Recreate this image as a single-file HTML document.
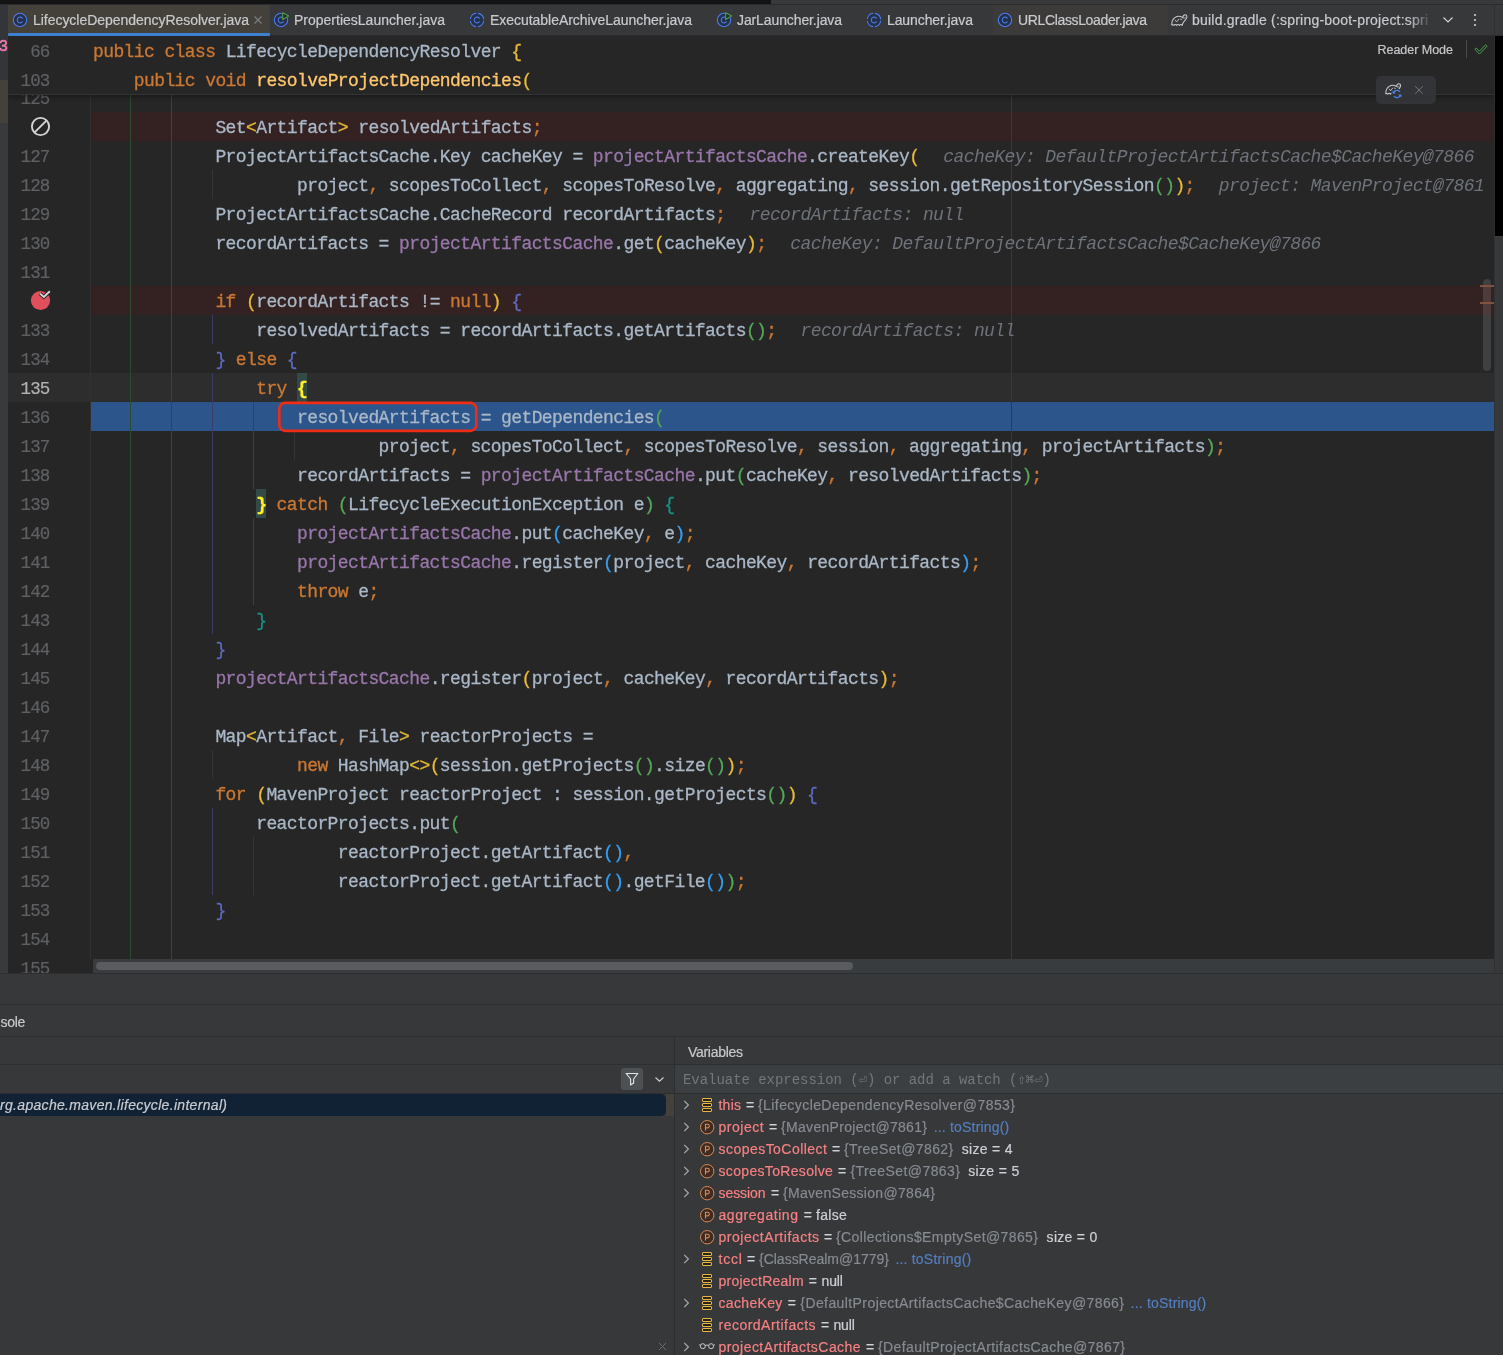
<!DOCTYPE html>
<html><head><meta charset="utf-8"><title>IDE</title>
<style>
*{box-sizing:border-box}
html,body{margin:0;padding:0}
body{will-change:transform;width:1503px;height:1355px;position:relative;overflow:hidden;background:#37383a;font-family:"Liberation Sans",sans-serif;font-size:14px;color:#ced0d6}
div,span,svg{position:absolute}
span{position:static}
.abs{position:absolute}
#editor{left:8px;top:36px;width:1486px;height:937px;background:#262626;overflow:hidden}
.ln{left:0;width:1486px;height:29px}
.code{position:absolute;top:0;height:29px;line-height:32px;white-space:pre;font-family:"Liberation Mono",monospace;font-size:18px;letter-spacing:-0.6px;color:#a9b7c6;-webkit-text-stroke:0.3px}
.num{position:absolute;left:0;width:41.4px;text-align:right;top:0;height:29px;line-height:32px;font-family:"Liberation Mono",monospace;font-size:17.5px;letter-spacing:-0.9px;-webkit-text-stroke:0.2px;color:#5e6063;white-space:pre}
.k{color:#cc7832}.f{color:#9876aa}.m{color:#ffc66d}.p{color:#cc7832}
.b0{color:#e8ba36}.b1{color:#54a857}.b2{color:#359ff4}.c2{color:#5c6bc0}.c3{color:#179387}
.bm{color:#ffef28;font-weight:bold;background:#344a47;display:inline-block;height:29px;vertical-align:top}
.h{color:#6e727a;font-style:italic;margin-left:24px;-webkit-text-stroke:0}
.g{width:1px}
.tab{top:4px;height:32px;line-height:32px;font-size:14px;color:#c9cace;white-space:pre;-webkit-text-stroke:0.2px}
.hs{left:0;width:1503px;height:1px;background:#2d2e30}
.row{height:22px;line-height:23px;white-space:pre;font-size:14px;-webkit-text-stroke:0.2px}
.vn{color:#f68183}.vg{color:#868a91}.vl{color:#547fbf}.vw{color:#ced0d6}
</style></head><body>

<div style="left:0;top:0;width:771px;height:4px;background:#131313"></div>
<div style="left:771px;top:0;width:732px;height:4px;background:#38393b"></div>
<div style="left:0;top:4px;width:1503px;height:1px;background:#2b2c2e;z-index:3"></div>
<div style="left:0;top:4px;width:1503px;height:32px;background:#37383a"></div>
<div style="left:0;top:35px;width:1503px;height:1px;background:#2b2b2d"></div>
<div style="left:0;top:4px;width:8px;height:76px;background:#333538"></div>
<div style="left:0;top:80px;width:8px;height:43px;background:#44413a"></div>
<div style="left:0;top:123px;width:8px;height:850px;background:#393a3c"></div>
<div style="left:-1.5px;top:36px;width:9.5px;height:22px;line-height:22px;-webkit-text-stroke:0.4px;font:16px/22px 'Liberation Mono',monospace;color:#f47cb4;overflow:hidden;white-space:pre">3</div>
<div style="left:8px;top:4px;width:262px;height:32px;background:#44413a"></div>
<div style="left:8px;top:33px;width:262px;height:3px;background:#3e80d0;border-radius:1px"></div>
<div style="left:993px;top:5px;width:175px;height:30px;background:#3c3b3a"></div>
<svg style="left:12px;top:12px" width="18" height="16" viewBox="0 0 18 16"><circle cx="8" cy="8" r="6.7" fill="#25304a" stroke="#4a7df0" stroke-width="1.05"/><path d="M10.3 6.1 A2.9 2.9 0 1 0 10.3 9.9" fill="none" stroke="#4a7de8" stroke-width="1.05" stroke-linecap="round"/></svg>
<div id="tab33" class="tab" style="left:33px;top:4px;white-space:pre;letter-spacing:-0.036px;">LifecycleDependencyResolver.java</div>
<svg style="left:273px;top:12px" width="18" height="16" viewBox="0 0 18 16"><circle cx="8" cy="8" r="6.7" fill="#25304a" stroke="#4a7df0" stroke-width="1.05"/><path d="M10.3 6.1 A2.9 2.9 0 1 0 10.3 9.9" fill="none" stroke="#4a7de8" stroke-width="1.05" stroke-linecap="round"/><path d="M9.7 0.7 L15.7 4 L9.7 7.4 Z" fill="#1f2e20" stroke="#4f9c4f" stroke-width="1.1" stroke-linejoin="round"/></svg>
<div id="tab294" class="tab" style="left:294px;top:4px;white-space:pre;letter-spacing:0.000px;">PropertiesLauncher.java</div>
<svg style="left:469px;top:12px" width="18" height="16" viewBox="0 0 18 16"><circle cx="8" cy="8" r="6.7" fill="#25304a" stroke="#4a7df0" stroke-width="1.05" stroke-dasharray="8.7 1.82" stroke-dashoffset="-0.91"/><path d="M10.3 6.1 A2.9 2.9 0 1 0 10.3 9.9" fill="none" stroke="#4a7de8" stroke-width="1.05" stroke-linecap="round"/></svg>
<div id="tab490" class="tab" style="left:490px;top:4px;white-space:pre;letter-spacing:-0.039px;">ExecutableArchiveLauncher.java</div>
<svg style="left:716px;top:12px" width="18" height="16" viewBox="0 0 18 16"><circle cx="8" cy="8" r="6.7" fill="#25304a" stroke="#4a7df0" stroke-width="1.05"/><path d="M10.3 6.1 A2.9 2.9 0 1 0 10.3 9.9" fill="none" stroke="#4a7de8" stroke-width="1.05" stroke-linecap="round"/><path d="M9.7 0.7 L15.7 4 L9.7 7.4 Z" fill="#1f2e20" stroke="#4f9c4f" stroke-width="1.1" stroke-linejoin="round"/></svg>
<div id="tab737" class="tab" style="left:737px;top:4px;white-space:pre;letter-spacing:-0.109px;">JarLauncher.java</div>
<svg style="left:866px;top:12px" width="18" height="16" viewBox="0 0 18 16"><circle cx="8" cy="8" r="6.7" fill="#25304a" stroke="#4a7df0" stroke-width="1.05" stroke-dasharray="8.7 1.82" stroke-dashoffset="-0.91"/><path d="M10.3 6.1 A2.9 2.9 0 1 0 10.3 9.9" fill="none" stroke="#4a7de8" stroke-width="1.05" stroke-linecap="round"/></svg>
<div id="tab887" class="tab" style="left:887px;top:4px;white-space:pre;letter-spacing:-0.099px;">Launcher.java</div>
<svg style="left:997px;top:12px" width="18" height="16" viewBox="0 0 18 16"><circle cx="8" cy="8" r="6.7" fill="#25304a" stroke="#4a7df0" stroke-width="1.05"/><path d="M10.3 6.1 A2.9 2.9 0 1 0 10.3 9.9" fill="none" stroke="#4a7de8" stroke-width="1.05" stroke-linecap="round"/></svg>
<div id="tab1018" class="tab" style="left:1018px;top:4px;white-space:pre;letter-spacing:-0.356px;">URLClassLoader.java</div>
<svg style="left:253px;top:15px" width="10" height="10" viewBox="0 0 10 10"><path d="M1.5 1.5 L8.5 8.5 M8.5 1.5 L1.5 8.5" stroke="#7d7f84" stroke-width="1.1" fill="none"/></svg>
<svg style="left:1170.5px;top:13.8px" width="17.0" height="12.5" viewBox="0 0 17 12.5"><path d="M0.8 11 C0.6 8 1.8 5 4.2 3.4 C6.6 1.9 9.6 2.2 11.6 3.6 C12 2 12.8 0.7 14.2 0.7 C15.6 0.7 16.1 2.2 15.7 3.6 C15.2 5.4 13.8 6.6 12.6 8 C11.8 9 11.4 10.2 11.2 11.4 C10.4 10.2 9.2 10.2 8.4 11.4 C7.6 10.2 6.4 10.2 5.6 11.4 C4.8 10.2 3.6 10.2 2.8 11.4 C2.2 10.8 1.4 10.6 0.8 11 Z" fill="none" stroke="#c8cacf" stroke-width="1.05" stroke-linejoin="round"/><path d="M4.2 6.4 L5.8 7.8 L7.8 5.2 M9.6 5.2 L10.6 5.6 M11.6 3.6 C12.6 4.4 13.6 4.4 14.3 3.6" fill="none" stroke="#c8cacf" stroke-width="0.9450000000000001" stroke-linecap="round"/></svg>
<div id="tab1192" class="tab" style="left:1192px;top:4px;white-space:pre;letter-spacing:0.211px;">build.gradle (:spring-boot-project:spri</div>
<div style="left:1408px;top:5px;width:24px;height:29px;background:linear-gradient(90deg,rgba(55,56,58,0),rgba(55,56,58,0.95))"></div>
<svg style="left:1442px;top:15px" width="12" height="10" viewBox="0 0 12 10"><path d="M1.5 2.5 L6 7 L10.5 2.5" fill="none" stroke="#ced0d6" stroke-width="1.2"/></svg>
<svg style="left:1472px;top:12px" width="6" height="16" viewBox="0 0 6 16"><circle cx="3" cy="3" r="1.1" fill="#ced0d6"/><circle cx="3" cy="8" r="1.1" fill="#ced0d6"/><circle cx="3" cy="13" r="1.1" fill="#ced0d6"/></svg>
<div style="left:1494px;top:36px;width:1px;height:200px;background:#2e2e2e"></div>
<div style="left:1495px;top:36px;width:8px;height:200px;background:#000"></div>
<div style="left:1494px;top:236px;width:9px;height:737px;background:#37383a"></div>
<div style="left:1494px;top:4px;width:1px;height:32px;background:#2f3032"></div>
<div style="left:1494px;top:236px;width:1px;height:737px;background:#303133"></div>
<div style="left:1495px;top:236px;width:8px;height:1px;background:#3c3d3f"></div>
<div id="editor">
<div style="left:0;top:337px;width:1486px;height:29px;background:#2d2d2d"></div>
<div style="left:83px;top:76px;width:1403px;height:29px;background:#342121"></div>
<div style="left:83px;top:250px;width:1403px;height:29px;background:#342121"></div>
<div style="left:83px;top:366px;width:1403px;height:29px;background:#2c558c"></div>
<div class="g" style="left:82px;top:0;height:923px;background:#313131"></div>
<div class="g" style="left:1003px;top:58px;height:865px;background:#393939"></div>
<div class="g" style="left:122px;top:58px;height:865px;background:#2c4a2e"></div>
<div class="g" style="left:163px;top:58px;height:865px;background:#2a4463"></div>
<div class="g" style="left:204px;top:279px;height:29px;background:#3b3d66"></div>
<div class="g" style="left:204px;top:337px;height:261px;background:#3b3d66"></div>
<div class="g" style="left:204px;top:772px;height:87px;background:#3b3d66"></div>
<div class="g" style="left:204px;top:134px;height:29px;background:#343434"></div>
<div class="g" style="left:204px;top:714px;height:29px;background:#343434"></div>
<div class="g" style="left:245px;top:366px;height:87px;background:#1f4e49"></div>
<div class="g" style="left:245px;top:482px;height:87px;background:#1f4e49"></div>
<div class="g" style="left:245px;top:801px;height:58px;background:#353535"></div>
<div class="g" style="left:286px;top:395px;height:29px;background:#353535"></div>
<div class="ln" style="top:47px">
<div class="num">125</div>
</div>
<div class="ln" style="top:76px">
<div class="code" style="left:207.4px">Set<span class="b0">&lt;</span>Artifact<span class="b0">&gt;</span> resolvedArtifacts<span class="p">;</span></div>
</div>
<div class="ln" style="top:105px">
<div class="num">127</div>
<div class="code" style="left:207.4px">ProjectArtifactsCache.Key cacheKey = <span class="f">projectArtifactsCache</span>.createKey<span class="b0">(</span><span class="h">cacheKey: DefaultProjectArtifactsCache$CacheKey@7866</span></div>
</div>
<div class="ln" style="top:134px">
<div class="num">128</div>
<div class="code" style="left:289.0px">project<span class="p">,</span> scopesToCollect<span class="p">,</span> scopesToResolve<span class="p">,</span> aggregating<span class="p">,</span> session.getRepositorySession<span class="b1">()</span><span class="b0">)</span><span class="p">;</span><span class="h">project: MavenProject@7861</span></div>
</div>
<div class="ln" style="top:163px">
<div class="num">129</div>
<div class="code" style="left:207.4px">ProjectArtifactsCache.CacheRecord recordArtifacts<span class="p">;</span><span class="h">recordArtifacts: null</span></div>
</div>
<div class="ln" style="top:192px">
<div class="num">130</div>
<div class="code" style="left:207.4px">recordArtifacts = <span class="f">projectArtifactsCache</span>.get<span class="b0">(</span>cacheKey<span class="b0">)</span><span class="p">;</span><span class="h">cacheKey: DefaultProjectArtifactsCache$CacheKey@7866</span></div>
</div>
<div class="ln" style="top:221px">
<div class="num">131</div>
</div>
<div class="ln" style="top:250px">
<div class="code" style="left:207.4px"><span class="k">if </span><span class="b0">(</span>recordArtifacts != <span class="k">null</span><span class="b0">)</span> <span class="c2">{</span></div>
</div>
<div class="ln" style="top:279px">
<div class="num">133</div>
<div class="code" style="left:248.2px">resolvedArtifacts = recordArtifacts.getArtifacts<span class="b1">()</span><span class="p">;</span><span class="h">recordArtifacts: null</span></div>
</div>
<div class="ln" style="top:308px">
<div class="num">134</div>
<div class="code" style="left:207.4px"><span class="c2">}</span><span class="k"> else </span><span class="c2">{</span></div>
</div>
<div class="ln" style="top:337px">
<div class="num" style="color:#b2b2b2">135</div>
<div class="code" style="left:248.2px"><span class="k">try </span><span class="bm">{</span></div>
</div>
<div class="ln" style="top:366px">
<div class="num">136</div>
<div class="code" style="left:289.0px">resolvedArtifacts = getDependencies<span class="b1">(</span></div>
</div>
<div class="ln" style="top:395px">
<div class="num">137</div>
<div class="code" style="left:370.6px">project<span class="p">,</span> scopesToCollect<span class="p">,</span> scopesToResolve<span class="p">,</span> session<span class="p">,</span> aggregating<span class="p">,</span> projectArtifacts<span class="b1">)</span><span class="p">;</span></div>
</div>
<div class="ln" style="top:424px">
<div class="num">138</div>
<div class="code" style="left:289.0px">recordArtifacts = <span class="f">projectArtifactsCache</span>.put<span class="b1">(</span>cacheKey<span class="p">,</span> resolvedArtifacts<span class="b1">)</span><span class="p">;</span></div>
</div>
<div class="ln" style="top:453px">
<div class="num">139</div>
<div class="code" style="left:248.2px"><span class="bm">}</span><span class="k"> catch </span><span class="b1">(</span>LifecycleExecutionException e<span class="b1">)</span> <span class="c3">{</span></div>
</div>
<div class="ln" style="top:482px">
<div class="num">140</div>
<div class="code" style="left:289.0px"><span class="f">projectArtifactsCache</span>.put<span class="b2">(</span>cacheKey<span class="p">,</span> e<span class="b2">)</span><span class="p">;</span></div>
</div>
<div class="ln" style="top:511px">
<div class="num">141</div>
<div class="code" style="left:289.0px"><span class="f">projectArtifactsCache</span>.register<span class="b2">(</span>project<span class="p">,</span> cacheKey<span class="p">,</span> recordArtifacts<span class="b2">)</span><span class="p">;</span></div>
</div>
<div class="ln" style="top:540px">
<div class="num">142</div>
<div class="code" style="left:289.0px"><span class="k">throw </span>e<span class="p">;</span></div>
</div>
<div class="ln" style="top:569px">
<div class="num">143</div>
<div class="code" style="left:248.2px"><span class="c3">}</span></div>
</div>
<div class="ln" style="top:598px">
<div class="num">144</div>
<div class="code" style="left:207.4px"><span class="c2">}</span></div>
</div>
<div class="ln" style="top:627px">
<div class="num">145</div>
<div class="code" style="left:207.4px"><span class="f">projectArtifactsCache</span>.register<span class="b0">(</span>project<span class="p">,</span> cacheKey<span class="p">,</span> recordArtifacts<span class="b0">)</span><span class="p">;</span></div>
</div>
<div class="ln" style="top:656px">
<div class="num">146</div>
</div>
<div class="ln" style="top:685px">
<div class="num">147</div>
<div class="code" style="left:207.4px">Map<span class="b0">&lt;</span>Artifact<span class="p">,</span> File<span class="b0">&gt;</span> reactorProjects =</div>
</div>
<div class="ln" style="top:714px">
<div class="num">148</div>
<div class="code" style="left:289.0px"><span class="k">new </span>HashMap<span class="b0">&lt;&gt;(</span>session.getProjects<span class="b1">()</span>.size<span class="b1">()</span><span class="b0">)</span><span class="p">;</span></div>
</div>
<div class="ln" style="top:743px">
<div class="num">149</div>
<div class="code" style="left:207.4px"><span class="k">for </span><span class="b0">(</span>MavenProject reactorProject : session.getProjects<span class="b1">()</span><span class="b0">)</span> <span class="c2">{</span></div>
</div>
<div class="ln" style="top:772px">
<div class="num">150</div>
<div class="code" style="left:248.2px">reactorProjects.put<span class="b1">(</span></div>
</div>
<div class="ln" style="top:801px">
<div class="num">151</div>
<div class="code" style="left:329.8px">reactorProject.getArtifact<span class="b2">()</span><span class="p">,</span></div>
</div>
<div class="ln" style="top:830px">
<div class="num">152</div>
<div class="code" style="left:329.8px">reactorProject.getArtifact<span class="b2">()</span>.getFile<span class="b2">()</span><span class="b1">)</span><span class="p">;</span></div>
</div>
<div class="ln" style="top:859px">
<div class="num">153</div>
<div class="code" style="left:207.4px"><span class="c2">}</span></div>
</div>
<div class="ln" style="top:888px">
<div class="num">154</div>
</div>
<div class="ln" style="top:917px">
<div class="num">155</div>
</div>
<svg style="left:268px;top:363px" width="204" height="36" viewBox="0 0 204 36"><rect x="3.3" y="3.9" width="197" height="28" rx="6" ry="6" fill="none" stroke="#ee2d14" stroke-width="2.6"/></svg>
<svg style="left:22px;top:80px" width="21" height="21" viewBox="0 0 21 21"><circle cx="10.5" cy="10.5" r="8.6" fill="none" stroke="#d4d4d4" stroke-width="1.9"/><path d="M4.6 16.4 L16.4 4.6" stroke="#d4d4d4" stroke-width="1.9"/></svg>
<svg style="left:22px;top:253px" width="22" height="22" viewBox="0 0 22 22"><circle cx="10.5" cy="11.5" r="9.6" fill="#e04f5c"/><path d="M10.1 4.6 L13.8 7.9 L19.8 2.3" fill="none" stroke="#262626" stroke-width="3.8"/><path d="M10.1 4.6 L13.8 7.9 L19.8 2.3" fill="none" stroke="#d6d8de" stroke-width="1.9"/></svg>
<div style="left:0;top:0;width:1486px;height:59px;background:#262626;border-bottom:1px solid #333435;box-shadow:0 2px 5px rgba(0,0,0,0.35)">
<div class="num" style="top:0">66</div><div class="code" style="left:85.0px;top:0"><span class="k">public class </span>LifecycleDependencyResolver <span class="b0">{</span></div>
<div class="num" style="top:29px">103</div><div class="code" style="left:125.8px;top:29px"><span class="k">public void </span><span class="m">resolveProjectDependencies</span><span class="b0">(</span></div>
</div>
<div id="reader" style="left:1369.5px;top:4px;white-space:pre;letter-spacing:-0.025px;height:20px;line-height:21px;font-size:12.5px;color:#c6c7ca;-webkit-text-stroke:0.2px;">Reader Mode</div>
<div class="g" style="left:1458px;top:4px;height:18px;background:#4a4b4d"></div>
<svg style="left:1466px;top:7px" width="14" height="12" viewBox="0 0 14 12"><path d="M0.9 6.3 L2.3 5 L5.4 8.2 L11.6 1.8 L13.1 3.2 L5.4 11.1 Z" fill="none" stroke="#4d9e4f" stroke-width="1" stroke-linejoin="round"/></svg>
<div style="left:1368px;top:40px;width:60px;height:28px;background:rgba(52,53,56,0.92);border-radius:5px"></div>
<svg style="left:1376.5px;top:46.8px" width="16.7" height="12.2" viewBox="0 0 17 12.5"><path d="M0.8 11 C0.6 8 1.8 5 4.2 3.4 C6.6 1.9 9.6 2.2 11.6 3.6 C12 2 12.8 0.7 14.2 0.7 C15.6 0.7 16.1 2.2 15.7 3.6 C15.2 5.4 13.8 6.6 12.6 8 C11.8 9 11.4 10.2 11.2 11.4 C10.4 10.2 9.2 10.2 8.4 11.4 C7.6 10.2 6.4 10.2 5.6 11.4 C4.8 10.2 3.6 10.2 2.8 11.4 C2.2 10.8 1.4 10.6 0.8 11 Z" fill="none" stroke="#c8cacf" stroke-width="1.05" stroke-linejoin="round"/><path d="M4.2 6.4 L5.8 7.8 L7.8 5.2 M9.6 5.2 L10.6 5.6 M11.6 3.6 C12.6 4.4 13.6 4.4 14.3 3.6" fill="none" stroke="#c8cacf" stroke-width="0.9450000000000001" stroke-linecap="round"/></svg>
<svg style="left:1382px;top:51px" width="14" height="14" viewBox="0 0 14 14"><circle cx="7" cy="7" r="5.6" fill="#323335"/><path d="M3.6 6.2 A3.6 3.6 0 0 1 10 4.8 M10.4 7.8 A3.6 3.6 0 0 1 4 9.2" fill="none" stroke="#4a88f0" stroke-width="1.3"/><path d="M2.6 3.4 L2.6 6.6 L5.8 6.6 Z M11.4 10.6 L11.4 7.4 L8.2 7.4 Z" fill="#4a88f0"/></svg>
<svg style="left:1406px;top:49px" width="10" height="10" viewBox="0 0 10 10"><path d="M1.2 1.2 L8.8 8.8 M8.8 1.2 L1.2 8.8" stroke="#707276" stroke-width="1" fill="none"/></svg>
<div style="left:1475px;top:243px;width:8px;height:92px;border-radius:4px;background:rgba(255,255,255,0.12)"></div>
<div style="left:1472px;top:249px;width:14px;height:2px;background:#80523f"></div>
<div style="left:1472px;top:266px;width:14px;height:2px;background:#80523f"></div>
<div style="left:85px;top:923px;width:1401px;height:14px;background:#383c3f"></div>
<div style="left:88px;top:925.5px;width:757px;height:8.5px;border-radius:4.5px;background:#595b5e"></div>
</div>
<div class="hs" style="top:973px"></div>
<div class="hs" style="top:1004px"></div>
<div class="hs" style="top:1036px"></div>
<div class="hs" style="top:1064px"></div>
<div class="hs" style="top:1093px"></div>
<div style="left:674px;top:1037px;width:1px;height:318px;background:#2d2e30"></div>
<div id="sole" style="left:0.5px;top:1012px;white-space:pre;letter-spacing:-0.263px;height:20px;line-height:20px;font-size:14px;color:#c9cacd;-webkit-text-stroke:0.2px;">sole</div>
<div id="vars" style="left:688px;top:1041.6px;white-space:pre;letter-spacing:-0.291px;height:20px;line-height:20px;font-size:14px;color:#c9cacd;-webkit-text-stroke:0.2px;">Variables</div>
<div style="left:675px;top:1065px;width:828px;height:28px;background:#3c3f41"></div>
<div id="eval" style="left:683px;top:1065px;white-space:pre;letter-spacing:-0.041px;height:28px;line-height:30px;font-family:'Liberation Mono','DejaVu Sans Mono',monospace;font-size:14px;color:#73767a;">Evaluate expression (⏎) or add a watch (⇧⌘⏎)</div>
<div style="left:621px;top:1068px;width:22px;height:22px;background:#4e5154;border-radius:3px"></div>
<svg style="left:624px;top:1071px" width="16" height="16" viewBox="0 0 16 16"><path d="M2.2 2.5 L13.8 2.5 L9.6 8 L9.6 12 L6.6 14 L6.6 8 Z" fill="none" stroke="#e6e6e6" stroke-width="1.1" stroke-linejoin="round"/></svg>
<svg style="left:654px;top:1075px" width="11" height="9" viewBox="0 0 11 9"><path d="M1.5 2.5 L5.5 6.2 L9.5 2.5" fill="none" stroke="#ced0d6" stroke-width="1.1"/></svg>
<div style="left:666px;top:1094px;width:8px;height:22px;background:#44413a"></div>
<div style="left:0;top:1094px;width:666px;height:22px;background:#112235;border-radius:0 5px 5px 0"></div>
<div id="frame" style="left:0px;top:1094px;white-space:pre;letter-spacing:0.313px;height:22px;line-height:22px;font-size:14px;font-style:italic;color:#c9ccd2;-webkit-text-stroke:0.2px;">rg.apache.maven.lifecycle.internal)</div>
<svg style="left:657.5px;top:1341.5px" width="9" height="9" viewBox="0 0 9 9"><path d="M1 1 L8 8 M8 1 L1 8" stroke="#6a6c70" stroke-width="1" fill="none"/></svg>
<svg style="left:682px;top:1099px" width="8" height="12" viewBox="0 0 8 12"><path d="M2.2 1.8 L6.4 6 L2.2 10.2" fill="none" stroke="#a6aab0" stroke-width="1.2"/></svg>
<svg style="left:701px;top:1098px" width="12" height="16" viewBox="0 0 12 16"><rect x="1.5" y="0.5" width="9" height="3" rx="0.5" fill="#2a2418" stroke="#e6b648" stroke-width="1"/><rect x="1.5" y="5.5" width="9" height="3" rx="0.5" fill="#2a2418" stroke="#e6b648" stroke-width="1"/><rect x="1.5" y="10.5" width="9" height="3" rx="0.5" fill="#2a2418" stroke="#e6b648" stroke-width="1"/></svg>
<div id="v0_0" class="row vn" style="left:718.5px;top:1094px;white-space:pre;letter-spacing:0.234px;">this</div>
<div id="v0_1" class="row vw" style="left:746px;top:1094px;white-space:pre;">=</div>
<div id="v0_2" class="row vg" style="left:758px;top:1094px;white-space:pre;letter-spacing:0.423px;">{LifecycleDependencyResolver@7853}</div>
<svg style="left:682px;top:1121px" width="8" height="12" viewBox="0 0 8 12"><path d="M2.2 1.8 L6.4 6 L2.2 10.2" fill="none" stroke="#a6aab0" stroke-width="1.2"/></svg>
<svg style="left:699px;top:1119px" width="16" height="16" viewBox="0 0 16 16"><circle cx="8.2" cy="8.2" r="6.7" fill="#3f2b23" stroke="#d98a58" stroke-width="1"/><path d="M6.5 11.4 L6.5 5.3 L8.5 5.3 A1.8 1.8 0 0 1 8.5 8.9 L6.5 8.9" fill="none" stroke="#d98a58" stroke-width="1.1"/></svg>
<div id="v1_0" class="row vn" style="left:718.5px;top:1116px;white-space:pre;letter-spacing:0.511px;">project</div>
<div id="v1_1" class="row vw" style="left:769px;top:1116px;white-space:pre;">=</div>
<div id="v1_2" class="row vg" style="left:781px;top:1116px;white-space:pre;letter-spacing:0.316px;">{MavenProject@7861}</div>
<div id="v1_3" class="row vl" style="left:933.7px;top:1116px;white-space:pre;letter-spacing:0.189px;">... toString()</div>
<svg style="left:682px;top:1143px" width="8" height="12" viewBox="0 0 8 12"><path d="M2.2 1.8 L6.4 6 L2.2 10.2" fill="none" stroke="#a6aab0" stroke-width="1.2"/></svg>
<svg style="left:699px;top:1141px" width="16" height="16" viewBox="0 0 16 16"><circle cx="8.2" cy="8.2" r="6.7" fill="#3f2b23" stroke="#d98a58" stroke-width="1"/><path d="M6.5 11.4 L6.5 5.3 L8.5 5.3 A1.8 1.8 0 0 1 8.5 8.9 L6.5 8.9" fill="none" stroke="#d98a58" stroke-width="1.1"/></svg>
<div id="v2_0" class="row vn" style="left:718.5px;top:1138px;white-space:pre;letter-spacing:0.462px;">scopesToCollect</div>
<div id="v2_1" class="row vw" style="left:832px;top:1138px;white-space:pre;">=</div>
<div id="v2_2" class="row vg" style="left:844px;top:1138px;white-space:pre;letter-spacing:0.400px;">{TreeSet@7862}</div>
<div id="v2_3" class="row vw" style="left:961.7px;top:1138px;white-space:pre;letter-spacing:0.308px;">size = 4</div>
<svg style="left:682px;top:1165px" width="8" height="12" viewBox="0 0 8 12"><path d="M2.2 1.8 L6.4 6 L2.2 10.2" fill="none" stroke="#a6aab0" stroke-width="1.2"/></svg>
<svg style="left:699px;top:1163px" width="16" height="16" viewBox="0 0 16 16"><circle cx="8.2" cy="8.2" r="6.7" fill="#3f2b23" stroke="#d98a58" stroke-width="1"/><path d="M6.5 11.4 L6.5 5.3 L8.5 5.3 A1.8 1.8 0 0 1 8.5 8.9 L6.5 8.9" fill="none" stroke="#d98a58" stroke-width="1.1"/></svg>
<div id="v3_0" class="row vn" style="left:718.5px;top:1160px;white-space:pre;letter-spacing:0.333px;">scopesToResolve</div>
<div id="v3_1" class="row vw" style="left:838px;top:1160px;white-space:pre;">=</div>
<div id="v3_2" class="row vg" style="left:850.4px;top:1160px;white-space:pre;letter-spacing:0.431px;">{TreeSet@7863}</div>
<div id="v3_3" class="row vw" style="left:968.2px;top:1160px;white-space:pre;letter-spacing:0.351px;">size = 5</div>
<svg style="left:682px;top:1187px" width="8" height="12" viewBox="0 0 8 12"><path d="M2.2 1.8 L6.4 6 L2.2 10.2" fill="none" stroke="#a6aab0" stroke-width="1.2"/></svg>
<svg style="left:699px;top:1185px" width="16" height="16" viewBox="0 0 16 16"><circle cx="8.2" cy="8.2" r="6.7" fill="#3f2b23" stroke="#d98a58" stroke-width="1"/><path d="M6.5 11.4 L6.5 5.3 L8.5 5.3 A1.8 1.8 0 0 1 8.5 8.9 L6.5 8.9" fill="none" stroke="#d98a58" stroke-width="1.1"/></svg>
<div id="v4_0" class="row vn" style="left:718.5px;top:1182px;white-space:pre;letter-spacing:-0.061px;">session</div>
<div id="v4_1" class="row vw" style="left:771px;top:1182px;white-space:pre;">=</div>
<div id="v4_2" class="row vg" style="left:783px;top:1182px;white-space:pre;letter-spacing:0.303px;">{MavenSession@7864}</div>
<svg style="left:699px;top:1207px" width="16" height="16" viewBox="0 0 16 16"><circle cx="8.2" cy="8.2" r="6.7" fill="#3f2b23" stroke="#d98a58" stroke-width="1"/><path d="M6.5 11.4 L6.5 5.3 L8.5 5.3 A1.8 1.8 0 0 1 8.5 8.9 L6.5 8.9" fill="none" stroke="#d98a58" stroke-width="1.1"/></svg>
<div id="v5_0" class="row vn" style="left:718.5px;top:1204px;white-space:pre;letter-spacing:0.555px;">aggregating</div>
<div id="v5_1" class="row vw" style="left:803.8px;top:1204px;white-space:pre;">=</div>
<div id="v5_2" class="row vw" style="left:816px;top:1204px;white-space:pre;letter-spacing:0.330px;">false</div>
<svg style="left:699px;top:1229px" width="16" height="16" viewBox="0 0 16 16"><circle cx="8.2" cy="8.2" r="6.7" fill="#3f2b23" stroke="#d98a58" stroke-width="1"/><path d="M6.5 11.4 L6.5 5.3 L8.5 5.3 A1.8 1.8 0 0 1 8.5 8.9 L6.5 8.9" fill="none" stroke="#d98a58" stroke-width="1.1"/></svg>
<div id="v6_0" class="row vn" style="left:718.5px;top:1226px;white-space:pre;letter-spacing:0.534px;">projectArtifacts</div>
<div id="v6_1" class="row vw" style="left:824px;top:1226px;white-space:pre;">=</div>
<div id="v6_2" class="row vg" style="left:836px;top:1226px;white-space:pre;letter-spacing:0.397px;">{Collections$EmptySet@7865}</div>
<div id="v6_3" class="row vw" style="left:1046.6px;top:1226px;white-space:pre;letter-spacing:0.294px;">size = 0</div>
<svg style="left:682px;top:1253px" width="8" height="12" viewBox="0 0 8 12"><path d="M2.2 1.8 L6.4 6 L2.2 10.2" fill="none" stroke="#a6aab0" stroke-width="1.2"/></svg>
<svg style="left:701px;top:1252px" width="12" height="16" viewBox="0 0 12 16"><rect x="1.5" y="0.5" width="9" height="3" rx="0.5" fill="#2a2418" stroke="#e6b648" stroke-width="1"/><rect x="1.5" y="5.5" width="9" height="3" rx="0.5" fill="#2a2418" stroke="#e6b648" stroke-width="1"/><rect x="1.5" y="10.5" width="9" height="3" rx="0.5" fill="#2a2418" stroke="#e6b648" stroke-width="1"/></svg>
<div id="v7_0" class="row vn" style="left:718.5px;top:1248px;white-space:pre;letter-spacing:0.767px;">tccl</div>
<div id="v7_1" class="row vw" style="left:747px;top:1248px;white-space:pre;">=</div>
<div id="v7_2" class="row vg" style="left:759px;top:1248px;white-space:pre;letter-spacing:-0.011px;">{ClassRealm@1779}</div>
<div id="v7_3" class="row vl" style="left:895.4px;top:1248px;white-space:pre;letter-spacing:0.205px;">... toString()</div>
<svg style="left:701px;top:1274px" width="12" height="16" viewBox="0 0 12 16"><rect x="1.5" y="0.5" width="9" height="3" rx="0.5" fill="#2a2418" stroke="#e6b648" stroke-width="1"/><rect x="1.5" y="5.5" width="9" height="3" rx="0.5" fill="#2a2418" stroke="#e6b648" stroke-width="1"/><rect x="1.5" y="10.5" width="9" height="3" rx="0.5" fill="#2a2418" stroke="#e6b648" stroke-width="1"/></svg>
<div id="v8_0" class="row vn" style="left:718.5px;top:1270px;white-space:pre;letter-spacing:0.238px;">projectRealm</div>
<div id="v8_1" class="row vw" style="left:808.8px;top:1270px;white-space:pre;">=</div>
<div id="v8_2" class="row vw" style="left:821.6px;top:1270px;white-space:pre;letter-spacing:-0.166px;">null</div>
<svg style="left:682px;top:1297px" width="8" height="12" viewBox="0 0 8 12"><path d="M2.2 1.8 L6.4 6 L2.2 10.2" fill="none" stroke="#a6aab0" stroke-width="1.2"/></svg>
<svg style="left:701px;top:1296px" width="12" height="16" viewBox="0 0 12 16"><rect x="1.5" y="0.5" width="9" height="3" rx="0.5" fill="#2a2418" stroke="#e6b648" stroke-width="1"/><rect x="1.5" y="5.5" width="9" height="3" rx="0.5" fill="#2a2418" stroke="#e6b648" stroke-width="1"/><rect x="1.5" y="10.5" width="9" height="3" rx="0.5" fill="#2a2418" stroke="#e6b648" stroke-width="1"/></svg>
<div id="v9_0" class="row vn" style="left:718.5px;top:1292px;white-space:pre;letter-spacing:0.331px;">cacheKey</div>
<div id="v9_1" class="row vw" style="left:787.8px;top:1292px;white-space:pre;">=</div>
<div id="v9_2" class="row vg" style="left:800.3px;top:1292px;white-space:pre;letter-spacing:0.410px;">{DefaultProjectArtifactsCache$CacheKey@7866}</div>
<div id="v9_3" class="row vl" style="left:1130.6px;top:1292px;white-space:pre;letter-spacing:0.197px;">... toString()</div>
<svg style="left:701px;top:1318px" width="12" height="16" viewBox="0 0 12 16"><rect x="1.5" y="0.5" width="9" height="3" rx="0.5" fill="#2a2418" stroke="#e6b648" stroke-width="1"/><rect x="1.5" y="5.5" width="9" height="3" rx="0.5" fill="#2a2418" stroke="#e6b648" stroke-width="1"/><rect x="1.5" y="10.5" width="9" height="3" rx="0.5" fill="#2a2418" stroke="#e6b648" stroke-width="1"/></svg>
<div id="v10_0" class="row vn" style="left:718.5px;top:1314px;white-space:pre;letter-spacing:0.489px;">recordArtifacts</div>
<div id="v10_1" class="row vw" style="left:820.9px;top:1314px;white-space:pre;">=</div>
<div id="v10_2" class="row vw" style="left:833.4px;top:1314px;white-space:pre;letter-spacing:-0.099px;">null</div>
<svg style="left:682px;top:1341px" width="8" height="12" viewBox="0 0 8 12"><path d="M2.2 1.8 L6.4 6 L2.2 10.2" fill="none" stroke="#a6aab0" stroke-width="1.2"/></svg>
<svg style="left:698px;top:1338.4px" width="18" height="16" viewBox="0 0 18 16"><circle cx="4.8" cy="8.2" r="2.5" fill="none" stroke="#c8cacf" stroke-width="1"/><circle cx="13.1" cy="8.2" r="2.5" fill="none" stroke="#c8cacf" stroke-width="1"/><path d="M7.2 7.6 Q8.95 6.4 10.7 7.6 M2.4 7.4 L1.1 6.6 M15.5 7.4 L16.9 6.6" fill="none" stroke="#c8cacf" stroke-width="1"/></svg>
<div id="v11_0" class="row vn" style="left:718.5px;top:1336px;white-space:pre;letter-spacing:0.452px;">projectArtifactsCache</div>
<div id="v11_1" class="row vw" style="left:866px;top:1336px;white-space:pre;">=</div>
<div id="v11_2" class="row vg" style="left:878px;top:1336px;white-space:pre;letter-spacing:0.392px;">{DefaultProjectArtifactsCache@7867}</div>
</body></html>
